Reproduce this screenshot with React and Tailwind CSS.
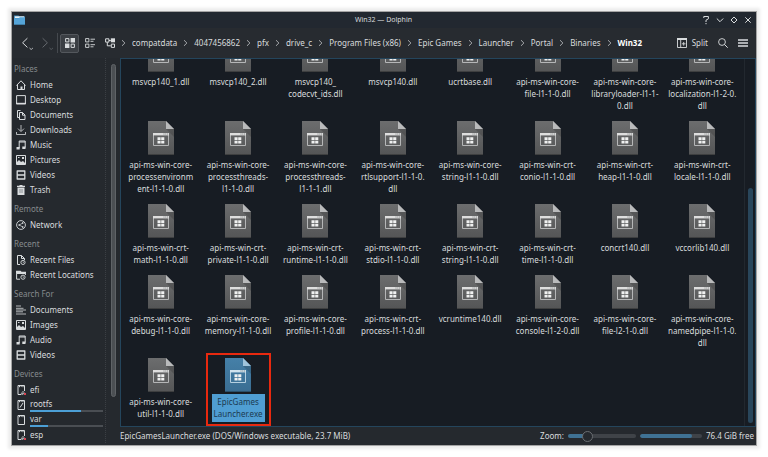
import React, { useLayoutEffect, useRef, useState } from "react";

const PLACES = [
  {
    title: "Places",
    items: [
      { name: "Home", icon: "home" },
      { name: "Desktop", icon: "desktop" },
      { name: "Documents", icon: "documents" },
      { name: "Downloads", icon: "downloads" },
      { name: "Music", icon: "music" },
      { name: "Pictures", icon: "pictures" },
      { name: "Videos", icon: "videos" },
      { name: "Trash", icon: "trash" },
    ],
  },
  { title: "Remote", items: [{ name: "Network", icon: "network" }] },
  {
    title: "Recent",
    items: [
      { name: "Recent Files", icon: "recentFiles" },
      { name: "Recent Locations", icon: "recentLocations" },
    ],
  },
  {
    title: "Search For",
    items: [
      { name: "Documents", icon: "text" },
      { name: "Images", icon: "pictures" },
      { name: "Audio", icon: "music" },
      { name: "Videos", icon: "videos" },
    ],
  },
  {
    title: "Devices",
    items: [
      { name: "efi", icon: "unmounted" },
      { name: "rootfs", icon: "root", used: 70 },
      { name: "var", icon: "drive", used: 25 },
      { name: "esp", icon: "unmounted" },
    ],
  },
];

const CRUMBS = [
  "compatdata",
  "4047456862",
  "pfx",
  "drive_c",
  "Program Files (x86)",
  "Epic Games",
  "Launcher",
  "Portal",
  "Binaries",
  "Win32",
];

// each entry is the label already broken into lines
const FILES = [
  ["msvcp140_1.dll"],
  ["msvcp140_2.dll"],
  ["msvcp140_", "codecvt_ids.dll"],
  ["msvcp140.dll"],
  ["ucrtbase.dll"],
  ["api-ms-win-core-", "file-l1-1-0.dll"],
  ["api-ms-win-core-", "libraryloader-l1-1-", "0.dll"],
  ["api-ms-win-core-", "localization-l1-2-0.", "dll"],
  ["api-ms-win-core-", "processenvironm", "ent-l1-1-0.dll"],
  ["api-ms-win-core-", "processthreads-", "l1-1-0.dll"],
  ["api-ms-win-core-", "processthreads-", "l1-1-1.dll"],
  ["api-ms-win-core-", "rtlsupport-l1-1-0.", "dll"],
  ["api-ms-win-core-", "string-l1-1-0.dll"],
  ["api-ms-win-crt-", "conio-l1-1-0.dll"],
  ["api-ms-win-crt-", "heap-l1-1-0.dll"],
  ["api-ms-win-crt-", "locale-l1-1-0.dll"],
  ["api-ms-win-crt-", "math-l1-1-0.dll"],
  ["api-ms-win-crt-", "private-l1-1-0.dll"],
  ["api-ms-win-crt-", "runtime-l1-1-0.dll"],
  ["api-ms-win-crt-", "stdio-l1-1-0.dll"],
  ["api-ms-win-crt-", "string-l1-1-0.dll"],
  ["api-ms-win-crt-", "time-l1-1-0.dll"],
  ["concrt140.dll"],
  ["vccorlib140.dll"],
  ["api-ms-win-core-", "debug-l1-1-0.dll"],
  ["api-ms-win-core-", "memory-l1-1-0.dll"],
  ["api-ms-win-core-", "profile-l1-1-0.dll"],
  ["api-ms-win-crt-", "process-l1-1-0.dll"],
  ["vcruntime140.dll"],
  ["api-ms-win-core-", "console-l1-2-0.dll"],
  ["api-ms-win-core-", "file-l2-1-0.dll"],
  ["api-ms-win-core-", "namedpipe-l1-1-0.", "dll"],
  ["api-ms-win-core-", "util-l1-1-0.dll"],
  ["EpicGames", "Launcher.exe"],
];

const drive = <path d="M2 .5h6.5v9H2z M3.5 1v1.2 M5.2 1v.8 M7 1v1.2" />;

const ICONS = {
  home: (
    <>
      <path d="M.5 5.5 5 .8l4.5 4.7 M1.5 5v4.5h7V5" />
      <path d="M4.5 6.5h2v3h-2z" fill="currentColor" stroke="none" />
    </>
  ),
  desktop: (
    <>
      <path d="M.6.6h8.8v8.3H.6z" />
      <path d="M0 8.5h10" strokeWidth="1.4" />
    </>
  ),
  documents: <path d="M3.5 7.5h-2v-7h3 M3.5 2.5h3l2.5 2.5v4.5H3.5z M6.5 2.5v2.7H9" />,
  downloads: <path d="M5 0v6 M2 3.6l3 3 3-3 M.5 7v2.5h9V7" strokeWidth=".8" />,
  music: (
    <>
      <path d="M3.2 8V1h6v6.6 M3.2 2h6" />
      <path d="M.5 7h3.2v2.5H.5z M6.3 6.5h3.2V9H6.3z" fill="currentColor" stroke="none" />
    </>
  ),
  pictures: (
    <>
      <path d="M.5.5h9v9h-9z" />
      <path d="M1 9V7l2-2 2 2 2-1 2 2v1z M6 2h2v2H6z M2 2h1.5v1H2z" fill="currentColor" stroke="none" />
    </>
  ),
  videos: <path d="M1.2.5v9 M8.8.5v9 M1 1h8 M1 5h8 M1 9h8" strokeWidth="1.3" />,
  trash: (
    <>
      <path d="M1 1.3h8 M3.5.6h3" strokeWidth="1.3" />
      <path d="M1.5 2.5h7V10h-7z" fill="currentColor" stroke="none" />
      <path d="M4 4v4 M6 4v4" stroke="#777b80" strokeWidth=".8" />
    </>
  ),
  network: (
    <>
      <circle cx="5" cy="5" r="4.4" strokeWidth=".9" />
      <path d="M6.7 3 3.3 5l3.4 2" strokeWidth=".7" />
      <path d="M6 2.3h1.4v1.4H6z M2.5 4.3h1.4v1.4H2.5z M6 6.3h1.4v1.4H6z" fill="currentColor" stroke="none" />
    </>
  ),
  recentFiles: (
    <>
      <path d="M4 9.5H1.5v-9h4l3 3V5 M5.5.5v3h3" />
      <circle cx="7" cy="7.4" r="2.1" strokeWidth=".9" />
      <path d="M7 6.3v1.2h.9" strokeWidth=".6" />
    </>
  ),
  recentLocations: (
    <>
      <path d="M4 9.2H.6V3.5h8.8V5" />
      <path d="M0 .8h4.5l1 1H10v2H0z" fill="currentColor" stroke="none" />
      <circle cx="7" cy="7.2" r="2.1" strokeWidth=".9" />
      <path d="M7 6.2v1.2h.9" strokeWidth=".6" />
    </>
  ),
  text: <path d="M0 1h5 M0 3.3h7.5 M0 5h10 M0 6.8h7 M0 9h10" strokeWidth=".8" />,
  drive,
  root: (
    <>
      {drive}
      <path d="M4 7.5 7 3" />
    </>
  ),
  unmounted: (
    <>
      {drive}
      <path d="M5 6h5v4H5z" fill="#25292e" stroke="none" />
      <path d="M5.3 8.5 7 6.3l1.7 2.2z M5.3 9.6h2" strokeWidth=".7" />
      <path d="M8 8h2v2H8z" fill="#da4453" stroke="none" />
    </>
  ),
};

function PlaceIcon({ name }) {
  return (
    <svg viewBox="0 0 10 10" className="h-[10px] w-[10px] shrink-0" fill="none" stroke="currentColor" aria-hidden="true">
      {ICONS[name]}
    </svg>
  );
}

function Chevron() {
  return (
    <svg viewBox="0 0 5 8" className="h-2 w-[5px] shrink-0" fill="none" stroke="#b4b7ba" strokeWidth=".9" aria-hidden="true">
      <path d="M1 1.2 3.9 4 1 6.8" />
    </svg>
  );
}

function FileIcon({ selected }) {
  return (
    <svg viewBox="0 0 26 34" className="h-[34px] w-[26px] shrink-0" aria-hidden="true">
      <defs>
        <linearGradient id={selected ? "page-on" : "page"} x1="0" y1="0" x2="0" y2="1">
          <stop offset="0" stopColor={selected ? "#4580a8" : "#6c6d6e"} />
          <stop offset="1" stopColor={selected ? "#3a6d92" : "#545556"} />
        </linearGradient>
      </defs>
      <path d="M0 0h18l8 8v26H0z" fill={selected ? "url(#page-on)" : "url(#page)"} />
      <path d="M18 8h8v8z" fill="#000" opacity=".16" />
      <path d="M18 0l8 8h-8z" fill={selected ? "#9fc4dc" : "#b9babb"} />
      <path d="M0 33.5h26" stroke="#000" opacity=".25" />
      <path d="M5.5 12.5h15v12h-15z" fill="none" stroke={selected ? "#b4cfe0" : "#b5b6b7"} />
      <path d="M5 12h16v2.4H5z" fill={selected ? "#cfe2ee" : "#dedede"} />
      <path d="M15.5 13h1 M17.3 13h1 M19.1 13h1" stroke="#6b6e70" strokeWidth=".8" />
      <path d="M9.5 16.2h3.1v2.9H9.5z M13.2 16.2h3.1v2.9h-3.1z M9.5 19.7h3.1v2.9H9.5z M13.2 19.7h3.1v2.9h-3.1z" fill="#f0f1f1" />
    </svg>
  );
}

function TitleBar() {
  return (
    <header className="grid h-4 shrink-0 grid-cols-3 items-center bg-[#222830] pl-[2px] pr-[3px]">
      <svg viewBox="0 0 11 10" className="h-[10px] w-[11px]" aria-hidden="true">
        <path d="M0 .5h4.5l1 1H11V9.5H0z" fill="#3d87b8" />
        <path d="M.8 1.3h9.4V3H.8z" fill="#e8f1f6" />
        <path d="M0 3.3h4.8l1-1H11v7.2H0z" fill="#55a4d8" />
      </svg>
      <h1 className="text-center text-[7px] leading-4">Win32 — Dolphin</h1>
      <div className="flex items-center justify-end gap-1">
        <button aria-label="Help" className="h-[10px] w-[10px]">
          <svg viewBox="0 0 10 10" fill="none" stroke="currentColor">
            <path d="M2.8 3V1.5h4.6v2.3L5 5.2V7 M5 8v1.2" />
          </svg>
        </button>
        <button aria-label="Minimize" className="h-[10px] w-[10px]">
          <svg viewBox="0 0 10 10" fill="none" stroke="currentColor">
            <path d="M1.8 3.5 5 6.7l3.2-3.2" />
          </svg>
        </button>
        <button aria-label="Maximize" className="h-[10px] w-[10px]">
          <svg viewBox="0 0 10 10" fill="none" stroke="currentColor">
            <path d="M5 2 8 5 5 8 2 5z" />
          </svg>
        </button>
        <button aria-label="Close" className="h-[10px] w-[10px]">
          <svg viewBox="0 0 10 10" fill="none" stroke="currentColor">
            <path d="m2.3 2.3 5.4 5.4 M7.7 2.3 2.3 7.7" />
          </svg>
        </button>
      </div>
    </header>
  );
}

function Toolbar({ mode, onMode }) {
  const modes = [
    {
      id: "icons",
      art: (
        <>
          <path d="M.6.6h3.3v3.3H.6z M6.1 6.1h3.3v3.3H6.1z" />
          <path d="M5.6 0H10v4.4H5.6z M0 5.6h4.4V10H0z" fill="currentColor" stroke="none" />
        </>
      ),
    },
    {
      id: "compact",
      art: <path d="M.6.6h3.3v3.3H.6z M.6 6.1h3.3v3.3H.6z M5.5 1.2H10 M5.5 3.3h3 M5.5 6.7H10 M5.5 8.8h3" strokeWidth=".9" />,
    },
    {
      id: "details",
      art: (
        <>
          <path d="M.6.8h3.3v3.3H.6z M4 2.5h1.8 M2.3 4.2v3.6h3.5" />
          <path d="M5.8.3H10v4H5.8z" fill="currentColor" stroke="none" />
          <path d="M6.3 6.1h3.2v3.3H6.3z" />
        </>
      ),
    },
  ];

  return (
    <div className="flex h-[30px] shrink-0 items-center bg-[#272b30] pl-2 pr-2">
      <div className="flex h-5 items-center gap-[6px] border-r border-[#45494e] pr-[3px]">
        <button aria-label="Back" className="h-[14px] w-[14px]">
          <svg viewBox="0 0 14 14" fill="none" stroke="currentColor">
            <path d="M7.4 2.2 2.6 6.8l4.8 4.6" />
            <path d="m9.5 12 1.7 1.5L12.9 12" strokeWidth=".8" />
          </svg>
        </button>
        <button aria-label="Forward" className="h-[14px] w-[14px] text-[#65696e]">
          <svg viewBox="0 0 14 14" fill="none" stroke="currentColor">
            <path d="m2.6 2.2 4.8 4.6-4.8 4.6" />
            <path d="m9.5 12 1.7 1.5L12.9 12" strokeWidth=".8" />
          </svg>
        </button>
      </div>
      <div className="ml-[2px] flex gap-px">
        {modes.map((m) => (
          <button
            key={m.id}
            aria-label={m.id}
            aria-pressed={mode === m.id}
            onClick={() => onMode(m.id)}
            className={
              mode === m.id
                ? "flex h-[19px] w-[19px] items-center justify-center rounded-xs border border-[#54585d] bg-[#3b3f44]"
                : "flex h-[19px] w-[19px] items-center justify-center"
            }
          >
            <svg viewBox="0 0 10 10" className="h-[10px] w-[10px]" fill="none" stroke="currentColor">
              {m.art}
            </svg>
          </button>
        ))}
      </div>
      <nav aria-label="Location" className="ml-[2px] flex min-w-0 grow items-center gap-[6px] whitespace-nowrap text-[8px]">
        {CRUMBS.map((c, i) => (
          <React.Fragment key={c}>
            <Chevron />
            <a href="#" className={i === CRUMBS.length - 1 ? "font-bold text-white" : ""}>
              {c}
            </a>
          </React.Fragment>
        ))}
      </nav>
      <button className="flex items-center gap-[5px] text-[8px]">
        <svg viewBox="0 0 10 10" className="h-[10px] w-[10px]" fill="none" stroke="currentColor">
          <path d="M.5.5h9v9h-9z M3.7 1v8.5" strokeWidth=".9" />
          <path d="M0 0h10v2H0z" fill="currentColor" stroke="none" />
          <path d="M6.7 4v3.6 M4.9 5.8h3.6" strokeWidth=".9" />
        </svg>
        Split
      </button>
      <button aria-label="Search" className="ml-[10px]">
        <svg viewBox="0 0 10 10" className="h-[10px] w-[10px]" fill="none" stroke="currentColor">
          <circle cx="4" cy="4" r="3.4" strokeWidth=".9" />
          <path d="m6.5 6.5 3.2 3.2" />
        </svg>
      </button>
      <button aria-label="Menu" className="ml-[10px]">
        <svg viewBox="0 0 10 10" className="h-[10px] w-[10px]" stroke="currentColor" strokeWidth="1.5">
          <path d="M0 2h10 M0 5h10 M0 8h10" />
        </svg>
      </button>
    </div>
  );
}

function Sidebar() {
  return (
    <aside className="flex w-[108px] shrink-0 pb-[2px]">
      <div className="grow overflow-hidden border-r border-dotted border-[#3b3f44] pl-[2px] pt-[3px] text-[8px]">
        {PLACES.map((group) => (
          <section key={group.title} className="mb-1">
            <h2 className="mb-px h-[15px] leading-[15px] text-[#85898d]">{group.title}</h2>
            <ul>
              {group.items.map((item) => (
                <li key={item.name}>
                  <a href="#" className="flex h-[15px] items-center gap-1 pl-[2px] pr-[2px]">
                    <PlaceIcon name={item.icon} />
                    {item.used ? (
                      <span className="flex grow flex-col">
                        <span className="leading-[12px]">{item.name}</span>
                        <span className="h-[2px] bg-[#4a4e53]">
                          <span className="block h-full bg-[#4c9fd6]" style={{ width: `${item.used}%` }} />
                        </span>
                      </span>
                    ) : (
                      <span className="whitespace-nowrap">{item.name}</span>
                    )}
                  </a>
                </li>
              ))}
            </ul>
          </section>
        ))}
      </div>
      <div className="flex w-[14px] justify-center pb-[46px] pt-[6px]">
        <div className="w-[5px] rounded-full border border-[#5f6367] bg-[#4b4f53]" />
      </div>
    </aside>
  );
}

function FileItem({ lines, selected, onSelect }) {
  return (
    <button onClick={onSelect} className="relative flex flex-col items-center self-start">
      <FileIcon selected={selected} />
      <span
        className={
          selected
            ? "mt-[2px] bg-[#4f9ed3] px-[2px] py-[2px] text-[8px] leading-[12px] text-[#1c3a50]"
            : "mt-1 text-[8px] leading-[12px]"
        }
      >
        {lines.map((line) => (
          <span key={line} className="block whitespace-nowrap">
            {line}
          </span>
        ))}
      </span>
      {selected && <span className="absolute -top-[5px] -bottom-1 w-[65px] border-2 border-[#e8290f]" />}
    </button>
  );
}

function FileView() {
  const [selected, setSelected] = useState(FILES.length - 1);
  const scroller = useRef(null);

  useLayoutEffect(() => {
    scroller.current.scrollTop = scroller.current.scrollHeight;
  }, []);

  return (
    <main className="flex min-h-0 grow border border-[#24455c] bg-[#171c23]">
      <div ref={scroller} className="grow overflow-y-auto [scrollbar-width:none]">
        <div className="grid grid-cols-8 gap-y-[9px] pb-1 pl-px pr-[3px]">
          {FILES.map((lines, i) => (
            <FileItem key={i} lines={lines} selected={i === selected} onSelect={() => setSelected(i)} />
          ))}
        </div>
      </div>
      <div className="flex w-[11px] shrink-0 flex-col items-center border-l border-[#22282f] pb-[3px]">
        <div className="grow-[129]" />
        <div className="w-[5px] grow-[235] rounded-full bg-[#29465b]" />
      </div>
    </main>
  );
}

function StatusBar() {
  const [zoom, setZoom] = useState(24);
  return (
    <footer className="flex h-[18px] shrink-0 items-center pr-[2px] text-[8px]">
      <span className="grow">EpicGamesLauncher.exe (DOS/Windows executable, 23.7 MiB)</span>
      <label htmlFor="zoom">Zoom:</label>
      <input
        id="zoom"
        type="range"
        value={zoom}
        onChange={(e) => setZoom(Number(e.target.value))}
        className="ml-1 h-1 w-[68px] appearance-none rounded-full [&::-webkit-slider-thumb]:h-[11px] [&::-webkit-slider-thumb]:w-[11px] [&::-webkit-slider-thumb]:appearance-none [&::-webkit-slider-thumb]:rounded-full [&::-webkit-slider-thumb]:border [&::-webkit-slider-thumb]:border-[#6a6e72] [&::-webkit-slider-thumb]:bg-[#25292e]"
        style={{ background: `linear-gradient(to right, #3f7294 ${zoom}%, #3f4348 ${zoom}%)` }}
      />
      <div className="ml-1 h-1 w-[62px] overflow-hidden rounded-full bg-[#3f4348]">
        <div className="h-full w-5/6 rounded-full bg-[#3f7294]" />
      </div>
      <span className="ml-1">76.4 GiB free</span>
    </footer>
  );
}

export default function App() {
  const [mode, setMode] = useState("icons");
  return (
    <div className="flex h-screen bg-white p-3 font-['Noto_Sans',sans-serif] text-[#d9dcde]">
      <div className="flex min-w-0 grow flex-col bg-[#25292e] shadow-[0_0_0_1px_rgba(0,0,0,0.3),0_0_3px_4px_rgba(0,0,0,0.08)]">
        <TitleBar />
        <Toolbar mode={mode} onMode={setMode} />
        <div className="flex min-h-0 grow">
          <Sidebar />
          <div className="flex min-w-0 grow flex-col">
            <FileView />
            <StatusBar />
          </div>
        </div>
      </div>
    </div>
  );
}
